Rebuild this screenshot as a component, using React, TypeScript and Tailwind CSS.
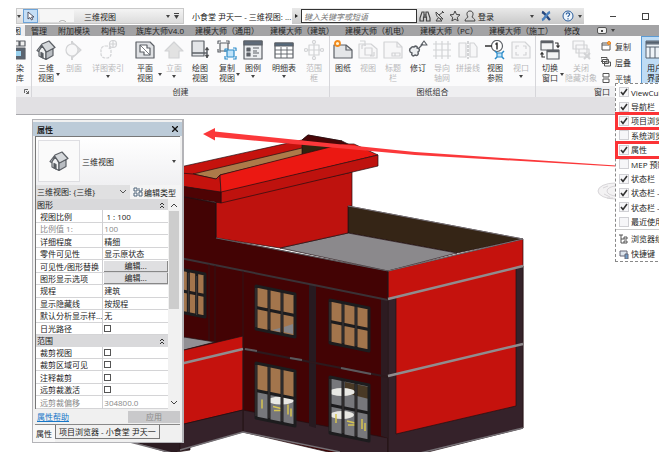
import React from 'react';

type Kids = { children?: React.ReactNode };

function Ico({ children, faded }: Kids & { faded?: boolean }) {
  return (
    <svg viewBox="0 0 20 20" className={faded ? 'size-5 opacity-25' : 'size-5'} fill="none" stroke="#5c6066" strokeWidth="1.2" strokeLinejoin="round">
      {children}
    </svg>
  );
}

function HouseShape() {
  return (
    <>
      <path d="M3 10v6l7 3.500V12L6.500 6z" fill="#f1f2f3" />
      <path d="M10 12v7.500l7-4V8z" fill="#b9bdc2" />
      <path d="M1 10.500 6 4l7-3 6 6.500L10.500 12 6 5.500 2.500 11.500z" fill="#d5d8db" />
      <path d="M5 12.500v4.500l2 1v-4.500z" fill="#55585c" />
    </>
  );
}

const icons: Record<string, React.ReactNode> = {
  house: <Ico><HouseShape /></Ico>,
  section: <Ico faded><path d="M8 2l9 8-9 8z" fill="#888" /><circle cx="8" cy="10" r="6" fill="#eee" /><path d="M8 1v3M8 16v4" strokeWidth="2" /></Ico>,
  callout: <Ico faded><rect x="3" y="6" width="10" height="12" rx="4" strokeDasharray="3 1" /><circle cx="15" cy="4" r="3.500" /><path d="M11.500 4h7M15 1v6M12 7l-1 2" /></Ico>,
  plan: <Ico><path d="M1 2h14l4 4v12H1z" fill="#dfe1e4" /><path d="M5 5h7v3h3v7H9v-3H5z" fill="#fff" /><path d="M5 5l10 10" strokeWidth=".8" /></Ico>,
  elevation: <Ico faded><path d="M10 2 1 11h4v7h10v-7h4z" fill="#999" /></Ico>,
  drafting: <Ico><path d="M2 1h12v15H2z" fill="#e3e5e8" /><path d="M2 13h15M17 8v10" strokeWidth="1.500" /><path d="m15 10 2-3 2 3zM15 15l2 3 2-3z" fill="#444" strokeWidth=".5" /></Ico>,
  duplicate: <Ico><path d="M3 3h8v8H3z" fill="#f4f4f4" /><path d="M1 4V1h3M9 1h3v3M1 9v3h3" /><path d="M10 10h7v7h-7z" fill="#bfe3fa" stroke="#2a8bc9" /><path d="M8 12V9h3M16 8h3v3M8 16v3h3M19 16v3h-3" stroke="#2a8bc9" /></Ico>,
  legend: <Ico><path d="M1 1h18v18H1z" fill="#eceef0" /><path d="M1 1h18v4H1z" fill="#5f6a78" /><path d="M4 8h3v3H4zM4 13h3v3H4z" fill="#5c6066" /><path d="M10 8h6M10 11h4M10 13h6M10 16h4" /></Ico>,
  schedule: <Ico><path d="M1 3h18v15H1z" fill="#fff" /><path d="M1 3h18v3H1z" fill="#55697c" /><path d="M1 10h18M1 14h18M7 7v11M13 7v11" strokeWidth=".9" /></Ico>,
  scope: <Ico faded><path d="M5 5h10v10H5zM10 3v14M3 10h14" /><circle cx="10" cy="2" r="1.500" /><circle cx="10" cy="18" r="1.500" /><circle cx="2" cy="10" r="1.500" /><circle cx="18" cy="10" r="1.500" /></Ico>,
  sheet: <Ico><path d="M1 5h12l6 5v8H1z" fill="#e4e6e8" /><path d="M13 5v5h6" /><circle cx="4.500" cy="3.500" r="2.500" fill="#fff3d0" stroke="#f28a1c" strokeWidth="1.800" /></Ico>,
  placeview: <Ico faded><path d="M1 4h12l6 5v9H1z" fill="#eee" /><path d="M7 8h7v7H7zM4 5v4M4 5h4M16 16h-4M16 16v-4M2 1h5v5" /></Ico>,
  titleblock: <Ico faded><path d="M1 2h13l5 5v11H1z" fill="#eee" /><path d="M9 13h8v3H9zM14 2v5h5M12 13v3" /></Ico>,
  revision: <Ico><path d="M3 8c1-2 3-1 3-1 2-2 4 0 3 1 3 0 3 3 1 4 1 3-1 4-3 3-2 2-4 0-3-2-3-1-3-4-1-5z" fill="#eceef0" strokeWidth="1.500" /><path d="m11 8 4-4M13 5l3-4 3 4z" /></Ico>,
  grid: <Ico faded><path d="M4 1v18M10 1v18M16 1v18M1 4h18M1 10h18M1 16h18" /></Ico>,
  matchline: <Ico faded><path d="M1 3h7v14H1zM12 3h4l3 4v10h-7z" fill="#eee" /><path d="M10 1v18" strokeDasharray="3 1" strokeWidth="2" /></Ico>,
  viewref: (
    <Ico>
      <circle cx="12" cy="6" r="5.500" fill="#fff" /><path d="M0 6h7M10.500 4.500 12 3v6.500" stroke="#333" strokeWidth="1.500" />
      <path d="M12 13h5v4h-5z" fill="#bfe3fa" stroke="#2a8bc9" /><path d="m10 11 2 2M19 11l-2 2M10 19l2-2M19 19l-2-2" stroke="#2a8bc9" strokeWidth="1.500" />
    </Ico>
  ),
  viewport: <Ico faded><path d="M1 2h13l5 5v11H1z" fill="#eee" /><path d="M5 9V6h3M12 6h3v3M5 12v3h3M15 12v3h-3" /></Ico>,
  swap: <Ico><path d="M1 1h12v9H1zM7 10h12v9H7z" fill="#f3f4f5" /><path d="M1 2h12M7 11h12" strokeWidth="2.500" /><path d="M15 3h3v4M16.500 5.500 18 7.500l1.500-2M5 17H2v-4M.5 14.500 2 12.500l1.500 2" stroke="#333" /></Ico>,
  closehidden: <Ico faded><path d="M2 1h11v8H2zM5 5h11v8H5zM8 9h10v8H8z" fill="#eee" /><path d="m13 13 6 6M19 13l-6 6" strokeWidth="2" /></Ico>,
  render: <Ico><path d="M0 1h5v5H0zM8 1h5v5H8zM14 1h5v5h-5z" fill="#eee" /><path d="M0 8h19v11H0z" fill="#5a6470" /><path d="M1 16h14V11H6z" fill="#9ad2ef" stroke="none" /></Ico>,
};

type Tool = { icon: string; label: string; w: string; off?: boolean; side?: boolean; below?: boolean };

const createTools: Tool[] = [
  { icon: 'house', label: '三维\n视图', w: 'w-7', side: true },
  { icon: 'section', label: '剖面', w: 'w-7', off: true },
  { icon: 'callout', label: '详图索引', w: 'w-10', off: true, below: true },
  { icon: 'plan', label: '平面\n视图', w: 'w-[34px]', side: true },
  { icon: 'elevation', label: '立面', w: 'w-6', off: true, below: true },
  { icon: 'drafting', label: '绘图\n视图', w: 'w-7' },
  { icon: 'duplicate', label: '复制\n视图', w: 'w-[26px]', side: true },
  { icon: 'legend', label: '图例', w: 'w-[26px]', below: true },
  { icon: 'schedule', label: '明细表', w: 'w-9', below: true },
  { icon: 'scope', label: '范围\n框', w: 'w-6', off: true },
];

const sheetTools: Tool[] = [
  { icon: 'sheet', label: '图纸', w: 'w-[26px]' },
  { icon: 'placeview', label: '视图', w: 'w-6', off: true },
  { icon: 'titleblock', label: '标题\n栏', w: 'w-[26px]', off: true },
  { icon: 'revision', label: '修订', w: 'w-6' },
  { icon: 'grid', label: '导向\n轴网', w: 'w-6', off: true },
  { icon: 'matchline', label: '拼接线', w: 'w-7', off: true },
  { icon: 'viewref', label: '视图\n参照', w: 'w-[26px]' },
  { icon: 'viewport', label: '视口', w: 'w-[26px]', off: true, below: true },
];

const windowTools: Tool[] = [
  { icon: 'swap', label: '切换\n窗口', w: 'w-7', side: true },
  { icon: 'closehidden', label: '关闭\n隐藏对象', w: 'w-[34px]', off: true },
];

function Caret({ className }: { className?: string }) {
  return (
    <svg viewBox="0 0 4 3" className={`h-[3px] w-1 shrink-0 ${className ?? ''}`} fill="#444"><path d="M0 0h4L2 3z" /></svg>
  );
}

function ToolButton({ tool }: { tool: Tool }) {
  return (
    <button type="button" disabled={tool.off} className={`relative flex shrink-0 flex-col items-center pt-1 ${tool.w}`}>
      {icons[tool.icon]}
      <span className={`mt-[3px] whitespace-pre text-center leading-[10px] ${tool.off ? 'text-[#b9b9bb]' : 'text-[#333]'}`}>{tool.label}</span>
      {tool.below && <Caret className="mt-0.5" />}
      {tool.side && <Caret className="absolute right-0 bottom-2.5" />}
    </button>
  );
}

function Panel({ title, children, className }: Kids & { title: React.ReactNode; className?: string }) {
  return (
    <section className={`flex shrink-0 flex-col border-r border-[#d6d6da] ${className ?? ''}`}>
      <div className="flex h-[50px] bg-[#fbfbfc]">{children}</div>
      <div className="h-[11px] bg-[#efeff1] text-center leading-[11px] text-[#333]">{title}</div>
    </section>
  );
}

function TitleBar() {
  return (
    <header className="flex h-4 items-center text-[#222]">
      <div className="flex h-4 w-[168px] shrink-0 items-center border border-[#c9c9c9] bg-linear-to-b from-[#f4f4f4] to-[#dcdcdc]">
        <Caret />
        <button type="button" aria-label="选择" className="ml-0.5 flex h-3.5 w-[15px] items-center justify-center border border-[#6da3d8] bg-[#c5def5]">
          <svg viewBox="0 0 8 10" className="h-2.5 w-2" fill="#fff" stroke="#445" strokeWidth=".9"><path d="M1 1v7l2-1.500L4.500 9l1.200-.7L4.500 6H7z" /></svg>
        </button>
        <div className="ml-0.5 flex h-3 w-[34px] items-end justify-end bg-[#f6f6f6] pr-2">
          <svg viewBox="0 0 7 2" className="h-0.5 w-[7px]" fill="none" stroke="#aaa"><path d="M0 2c2-2 5-2 7 0" /></svg>
        </div>
        <span className="ml-2.5 grow">三维视图</span>
        <Caret />
        <svg viewBox="0 0 5 6" className="mx-1 h-1.5 w-[5px]" fill="#444"><path d="M0 0h5v1H0zM0 2h5L2.500 6z" /></svg>
      </div>
      <h1 className="w-[108px] shrink-0 whitespace-nowrap pl-2">小食堂 尹天一 - 三维视图: ...</h1>
      <div className="flex h-4 grow items-center bg-linear-to-b from-[#e9e9e9] to-[#c9c9c9]">
        <svg viewBox="0 0 3 4" className="mx-[3px] h-1 w-[3px] shrink-0" fill="#222"><path d="M0 0v4l3-2z" /></svg>
        <input aria-label="搜索" placeholder="键入关键字或短语" className="h-3.5 w-[116px] border border-[#333] bg-white pl-0.5 text-[8px] italic placeholder:text-[#777]" />
        <svg viewBox="0 0 12 12" className="ml-0.5 size-3" fill="none" stroke="#444" strokeWidth="1.200"><path d="M3 2h2v3h2V2h2l2 6v3H7.500V7h-3v4H1V8zM5 5v3M7 5v3" /></svg>
        <svg viewBox="0 0 12 12" className="ml-[3px] size-3" fill="none" stroke="#444"><path d="M2 2c0 5 3 7 7 7zM5 5l4-3M8 1l2 2M4 8l-2 3h6L6 9" /></svg>
        <svg viewBox="0 0 12 12" className="ml-[3px] size-3" fill="none" stroke="#444"><path d="m6 1 1.500 3.500 3.500.3-2.700 2.500.8 3.700L6 9l-3.100 2 .8-3.700L1 4.800l3.500-.3z" /></svg>
        <svg viewBox="0 0 12 12" className="ml-[3px] size-3" fill="none" stroke="#444"><path d="M4 7C2 4 3 1 6 1s4 3 2 6c0 1 3 1 3 4H1c0-3 3-3 3-4z" /></svg>
        <button type="button" className="ml-0.5 shrink-0 text-[#222]">登录</button>
        <Caret className="ml-auto" />
        <svg viewBox="0 0 12 12" className="ml-1.5 size-3" fill="none" strokeWidth="2.400"><path d="M2 2c3 1 5 5 8 8" stroke="#26477d" /><path d="M10 2C7 3 5 9 2 10" stroke="#4b80be" /></svg>
        <svg viewBox="0 0 12 12" className="ml-2.5 size-3" fill="none"><circle cx="6" cy="6" r="5" fill="#eef5fc" stroke="#2a5d9c" /><path d="M4.300 4.500c0-2.500 3.500-2 3.300 0C7.500 5.800 6 5.500 6 7M6 8.200v1.200" stroke="#2a5d9c" strokeWidth="1.200" /></svg>
        <Caret className="mr-0.5 ml-1" />
      </div>
      <div className="flex w-[75px] shrink-0 items-center justify-end gap-[26px] pr-2.5">
        <button type="button" aria-label="最小化" className="h-px w-1.5 bg-[#444]" />
        <button type="button" aria-label="最大化" className="size-[7px] border border-[#444]" />
      </div>
    </header>
  );
}

const tabs = ['管理', '附加模块', '构件坞', '族库大师V4.0', '建模大师（通用）', '建模大师（建筑）', '建模大师（机电）', '建模大师（PC）', '建模大师（施工）', '修改'];

function Ribbon() {
  return (
    <>
      <nav className="mt-px flex h-[11px] items-center gap-[11px] overflow-hidden bg-[#a3a3a5] leading-[11px] text-[#222]">
        <button type="button" className="-mr-[5px] flex w-[9px] shrink-0 justify-end overflow-hidden bg-[#efeff1] pr-1">图</button>
        {tabs.map((t) => <button key={t} type="button" className="shrink-0 whitespace-nowrap">{t}</button>)}
        <button type="button" aria-label="面板显示" className="ml-1.5 flex shrink-0 items-center gap-1">
          <span className="flex h-[7px] w-2.5 items-center justify-center rounded-xs border border-[#555] bg-[#eee]"><span className="size-0.5 bg-[#444]" /></span>
          <Caret />
        </button>
      </nav>
      <div className="flex overflow-hidden">
        <Panel
          className="w-4 overflow-hidden"
          title={<svg viewBox="0 0 5 5" className="mt-[3px] ml-2 size-[5px]" fill="none" stroke="#444"><path d="M.5 4V.5H4M2 2l2.500 2.500M4.500 2v2.500H2" strokeWidth=".8" /></svg>}
        >
          <button type="button" className="-ml-2.5 flex w-5 shrink-0 flex-col items-center pt-1 text-[#333]">
            {icons.render}
            <span className="mt-[3px] whitespace-pre text-right leading-[10px]">{'渲染\n库'}</span>
          </button>
        </Panel>
        <Panel title="创建" className="w-[298px]">{createTools.map((t) => <ToolButton key={t.icon} tool={t} />)}</Panel>
        <Panel title="图纸组合" className="w-[206px]">{sheetTools.map((t) => <ToolButton key={t.icon} tool={t} />)}</Panel>
        <Panel title="窗口" className="w-[133px]">
          {windowTools.map((t) => <ToolButton key={t.icon} tool={t} />)}
          <div className="flex w-[43px] shrink-0 flex-col justify-around pt-0.5 pl-[3px] text-[#333]">
            <button type="button" className="flex items-center gap-1">
              <svg viewBox="0 0 10 10" className="size-2.5" fill="#fff" stroke="#555"><path d="M1 2h8v7H1zM1 4h7" /><circle cx="8" cy="2" r="1.500" fill="#f7b54a" stroke="#ee7d1a" /></svg>复制
            </button>
            <button type="button" className="flex items-center gap-1">
              <svg viewBox="0 0 10 10" className="size-2.5" fill="#fff" stroke="#555"><path d="M0 .5h6v4H0zM1.500 2.500h6v4h-6zM3.500 5h6v4h-6z" /></svg>层叠
            </button>
            <button type="button" className="flex items-center gap-1">
              <svg viewBox="0 0 10 10" className="size-2.5" fill="#fff" stroke="#555"><path d="M2 .5h6v3.500H2zM2 6h6v3.500H2z" /></svg>平铺
            </button>
          </div>
          <button type="button" className="flex w-7 shrink-0 flex-col items-center border border-[#5b9bd5] bg-[#bfdcf5] pt-[3px] text-[#222]">
            <svg viewBox="0 0 20 20" className="size-5" fill="#eef3f8" stroke="#566270"><path d="M1 1h18v17H1zM1 4h18M1 7h18M5 7v11M10 7v11" /><path d="M1 2.500h18" strokeWidth="2.500" /></svg>
            <span className="mt-[3px] whitespace-pre leading-[10px]">{'用户\n界面'}</span>
          </button>
        </Panel>
      </div>
      <div className="h-[18px] border-b border-[#a9a9ad] bg-[#e1e0e3]" />
    </>
  );
}

type Pane = [x: number, y: number, width: number, height: number, drop: number];

const panes: Pane[] = [
  [256, 286, 39, 43, 8],
  [330, 300, 39, 43, 8],
  [256, 363, 39, 55, 8],
  [330, 377, 39, 56, 8],
];

function BuildingWindow({ d, furnished }: { d: Pane; furnished?: 'low' | 'full' }) {
  const [x, y, w, h, s] = d;
  const m = y + h * 0.5;
  const a = furnished ? (furnished === 'full' ? y : m) : 0;
  return (
    <g>
      <path d={`M${x} ${y}l${w} ${s}v${h}l${-w} ${-s}z`} fill="#a3754c" />
      {furnished && (
        <>
          <path d={`M${x} ${a}l${w} ${s}V${y + h + s}l${-w} ${-s}z`} fill="#77777b" />
          {furnished === 'full' && <path d={`M${x + 15} ${y + 5}l24 5v12l-24 -6z`} fill="#493925" />}
          <g fill="#e9e8e4">
            {furnished === 'low' && <ellipse cx={x + 25} cy={m + 10} rx="13" ry="4" />}
            {furnished === 'full' && <><ellipse cx={x + 12} cy={y + 15} rx="13" ry="4" /><ellipse cx={x + 12} cy={y + 38} rx="12" ry="4" /></>}
          </g>
          <path d={`M${x + 6} ${m + 9}v9M${x + 17} ${m + 16}l8 2M${x + 32} ${m + 14}v10M${x + 18} ${m + 20}h9M${x + 35} ${m + 18}v8`} stroke="#d6c452" strokeWidth="1.500" />
        </>
      )}
      <g fill="none" stroke="#1d1c1e" strokeWidth="3">
        <path d={`M${x} ${y}l${w} ${s}v${h}l${-w} ${-s}z`} />
        <path d={`M${x + w / 3} ${y + s / 3}v${h}M${x + (w * 2) / 3} ${y + (s * 2) / 3}v${h}M${x} ${m}l${w} ${s}`} />
      </g>
      <path d={`M${x} ${y + 2}v${h - 4}M${x + w / 3} ${y + 4}v${h - 4}M${x + (w * 2) / 3} ${y + 7}v${h - 4}`} stroke="#57504f" strokeWidth=".6" />
    </g>
  );
}

function ModelView() {
  return (
    <svg viewBox="16 115 643 337" className="block w-full" role="img" aria-label="三维模型" strokeLinejoin="round">
      <g stroke="#221013" strokeWidth=".7">
        <path d="M130 441h60v9l-20 3z" fill="#2c1c22" />
        <path d="M180 195l36 8v35l172 33v195L243 432l-63 10z" fill="#430304" />
        <path d="M243 410l66 13 79 15v24L243 432z" fill="#35222a" />
        <path d="M184 337l31 5-35 9z" fill="#929094" />
        <path d="M180 351l63-15v74l-63 15z" fill="#c5120d" />
        <path d="M180 425l63-15v22l-63 18z" fill="#35222a" />
        <path d="M348 206l175 33-66 14-109-20z" fill="#352516" />
        <path d="M348 233l109 20-69 18-108-23z" fill="#8b898c" />
        <path d="M388 271l135-32v189l-103 25h-32z" fill="#c5120d" />
        <path d="M388 299l8-2v137l120-28V268l7-2v162l-103 26h-32z" fill="#35222a" />
        <path d="M309 284l7 2v142l-7-2z" fill="#271a20" stroke="none" />
        <path d="M381 298l7 2v138l-7-2z" fill="#2d1b21" stroke="none" />
        <path d="M216 202l136-30v34h-4v27l-68 15-64-10z" fill="#be120e" />
        <path d="M184 197l32 6v35" fill="none" />
        <path d="M180 167l122-27 6-5 34 6-30 9-92 25-4 5-36-6z" fill="#c5120d" />
        <path d="M302 140l6-5 34 6 8 4-10 2z" fill="#4a0607" />
        <path d="M302 142l36 4-36 10z" fill="#30240f" />
        <path d="M193 174l109-26v7l-82 20-4 4z" fill="#ad7a49" />
        <path d="M180 173l13 1 23 5 4-4 1 18-41-7z" fill="#c5120d" />
        <path d="M220 175l122-31h12l24 11-157 38z" fill="#eb1812" />
        <path d="M221 192l157-37v11l-157 37z" fill="#be120e" />
        <path d="M180 186l41 6v11l-41-7z" fill="#4e0304" />
      </g>
      <g fill="none" stroke="#5d585c" strokeWidth="2">
        <path d="M180 258l129 26 79 16" stroke="#3a3236" />
        <path d="M216 238l172 33" strokeWidth="1" />
        <path d="M243 349l145 28" stroke="#2c191d" />
        <path d="M245 349l12 2M290 358l12 2M341 368l30 6" />
      </g>
      <g fill="none" stroke="#29191c" strokeWidth=".8"><path d="M209 264v76M215 265v77M243 271v161M388 271v181" /></g>
      <g fill="none" stroke="#918c8e" strokeWidth="2.500">
        <path d="M388 299l135-33M388 376l135-32M180 364l63-15" />
        <path d="M348 206l175 33-135 32" strokeWidth="1" stroke="#757074" />
        <path d="M180 450l63-18 97 20M420 453l103-25M130 442l42 11" strokeWidth="1.500" stroke="#767176" />
      </g>
      <BuildingWindow d={[180, 269, 25, 43, 5]} />
      <BuildingWindow d={panes[0]} />
      <path d="M272 330l8-2v4zM284 327l9-3v10l-9-2z" fill="#858589" />
      <BuildingWindow d={panes[1]} />
      <BuildingWindow d={panes[2]} furnished="low" />
      <BuildingWindow d={panes[3]} furnished="full" />
      <g fill="#f3f2f3" stroke="#cfcdd0" strokeWidth=".8"><ellipse cx="615" cy="191" rx="17" ry="8" /><ellipse cx="617" cy="191" rx="10" ry="5" /><path d="M604 194l6 3M603 188l5-2M607 198h6" /></g>
      <path d="M203 134l12-6v3.500l200 20.500 201 13.500v1L415 155l-200-18v3.500z" fill="#fb383a" />
    </svg>
  );
}

function Tick({ id, on, box }: { id: string; on?: boolean; box: string }) {
  return (
    <span className="grid shrink-0">
      <input id={id} type="checkbox" defaultChecked={on} className={`col-start-1 row-start-1 appearance-none border ${box}`} />
      {on && <svg viewBox="0 0 10 10" className="pointer-events-none col-start-1 row-start-1 size-2.5" fill="none" stroke="#333" strokeWidth="1.600"><path d="m2 5 2 2.500L8 2" /></svg>}
    </span>
  );
}

const rows: [string, string][] = [
  ['#', '图形'], ['视图比例', ' 1 : 100'], ['比例值 1:', '100'], ['详细程度', '精细'], ['零件可见性', '显示原状态'],
  ['可见性/图形替换', 'btn'], ['图形显示选项', 'btn'], ['规程', '建筑'], ['显示隐藏线', '按规程'], ['默认分析显示样...', '无'], ['日光路径', 'box'],
  ['#', '范围'], ['裁剪视图', 'box'], ['裁剪区域可见', 'box'], ['注释裁剪', 'box'], ['远剪裁激活', 'box'], ['远剪裁偏移', '304800.0'],
];

function Properties() {
  return (
    <aside className="absolute top-1 left-4 w-[152px] border border-r-2 border-[#b4b4b8] bg-[#f0f0f0] text-[#222]">
      <div className="mt-0.5 flex h-3.5 items-center justify-between bg-[#bccbd8] px-1">
        <h2 className="font-bold">属性</h2>
        <button type="button" aria-label="关闭"><svg viewBox="0 0 6 6" className="size-1.5" stroke="#111" strokeWidth="1.300"><path d="m0 0 6 6M6 0 0 6" /></svg></button>
      </div>
      <div className="mx-0.5 border-t border-l border-[#777]">
        <button type="button" className="flex h-12 w-full items-center bg-linear-to-b from-white to-[#f0f0f2] pr-1 pl-0.5">
          <span className="flex h-[42px] w-[42px] items-center justify-center border border-[#dedee2] bg-[#fafafa]">{icons.house}</span>
          <span className="ml-0.5 grow text-left">三维视图</span>
          <Caret />
        </button>
        <div className="flex h-[14px] items-center bg-[#f4f4f4]">
          <div className="relative w-[94px]">
            <select aria-label="类型" className="h-3.5 w-full appearance-none bg-[#e0e0e1] pl-px text-[8px] leading-3.5"><option>三维视图: {'{三维}'}</option></select>
            <svg viewBox="0 0 6 4" className="pointer-events-none absolute top-[5px] right-1 h-1 w-1.5" fill="none" stroke="#555"><path d="m0 0 3 3 3-3" /></svg>
          </div>
          <button type="button" className="ml-[3px] flex items-center gap-px whitespace-nowrap">
            <svg viewBox="0 0 10 10" className="size-2.5" fill="#fff" stroke="#4c6379"><path d="M1 1h3v3H1zM1 6h3v3H1zM6 5h3v4H6zM6 1v3h3V1" /></svg>编辑类型
          </button>
        </div>
        <div className="flex">
          <table className="h-[210px] grow table-fixed border-collapse bg-white leading-[11px]">
            <colgroup><col className="w-[66px]" /><col className="w-[66px]" /></colgroup>
            <tbody>
              {rows.map(([k, v]) => k === '#' ? (
                <tr key={v} className="bg-[#d9d9db]"><th colSpan={2} scope="rowgroup" className="p-0 pl-px text-left font-normal">
                  <span className="flex items-center justify-between pr-1">{v}<svg viewBox="0 0 4 6" className="h-1.5 w-1" fill="none" stroke="#333"><path d="m0 3 2-2 2 2M0 6l2-2 2 2" /></svg></span>
                </th></tr>
              ) : (
                <tr key={k} className={`border-b border-[#d4d4d6] ${v === '100' || v === '304800.0' ? 'text-[#888]' : ''}`}>
                  <th scope="row" className="whitespace-nowrap border-r border-[#cfcfd2] p-0 pl-1 text-left font-normal">{v === 'box' ? <label htmlFor={k}>{k}</label> : k}</th>
                  <td className="whitespace-pre p-0 pl-px">
                    {v === 'btn' ? <button type="button" aria-label={k} className="block h-[11px] w-full border-r border-b border-[#888] bg-[#dfdfe1] text-center leading-[10px]">编辑...</button>
                      : v === 'box' ? <Tick id={k} box="size-[7px] border-[#555] bg-white" /> : v}
                  </td>
                </tr>
              ))}
            </tbody>
          </table>
          <div className="flex w-3 shrink-0 flex-col items-center justify-between bg-[#f1f1f1] py-1">
            <svg viewBox="0 0 6 4" className="h-1 w-1.5" fill="none" stroke="#444"><path d="m0 4 3-3 3 3" /></svg>
            <div className="mt-1 mb-auto h-[98px] w-2.5 bg-[#cdcdcd]" />
            <svg viewBox="0 0 6 4" className="h-1 w-1.5" fill="none" stroke="#444"><path d="m0 0 3 3 3-3" /></svg>
          </div>
        </div>
      </div>
      <div className="mx-0.5 flex h-4 items-center justify-between border-b border-[#888] pl-0.5">
        <a href="#help" className="text-[#1677c8] underline">属性帮助</a>
        <button type="button" disabled className="h-3 w-[52px] bg-[#c9c9cb] leading-3 text-[#888]">应用</button>
      </div>
      <div className="flex h-[17px]">
        <button type="button" className="w-[22px] bg-[#f8f8f8] text-center">属性</button>
        <button type="button" className="mb-[3px] whitespace-nowrap border border-t-0 border-[#777] px-[3px]">项目浏览器 - 小食堂 尹天一</button>
      </div>
    </aside>
  );
}

const menu: [string, boolean][] = [
  ['ViewCube', true], ['导航栏', true], ['项目浏览器', true], ['系统浏览器', false], ['属性', true],
  ['MEP 预制零件', false], ['状态栏', true], ['状态栏 - 工作集', true], ['状态栏 - 设计选项', true], ['最近使用的文件', false],
];

function UiMenu() {
  return (
    <div className="absolute top-[75px] -right-6 w-[68px] border border-dashed border-[#888] bg-white text-[#222]">
      <ul className="grid h-[145px] auto-rows-fr pt-px">
        {menu.map(([t, on], i) => (
          <li key={t} className="relative flex items-center gap-0.5 whitespace-nowrap pl-[3px]">
            <Tick id={`m${i}`} on={on} box="size-2.5 border-[#d0d0d4] bg-[#f6f6f8]" />
            <label htmlFor={`m${i}`}>{t}</label>
            {(i === 2 || i === 4) && <span className="pointer-events-none absolute -inset-x-px -inset-y-0.5 border-3 border-[#fb3336]" />}
          </li>
        ))}
      </ul>
      <div className="grid auto-rows-[15px] border-t border-[#ccc] pt-px">
        <button type="button" className="flex items-center gap-0.5 whitespace-nowrap pl-[3px]">
          <svg viewBox="0 0 10 10" className="size-2.5" fill="none" stroke="#555"><path d="M0 1h4M2 1v8h3M2 5h3M5 3h3v2H5zM5 7h3v2H5z" /></svg>浏览器组织
        </button>
        <button type="button" className="flex items-center gap-0.5 whitespace-nowrap pl-[3px]">
          <svg viewBox="0 0 10 10" className="size-2.5" fill="#dde5ee" stroke="#667"><path d="M1 2h7v5H1z" /><path d="M6 5h3v5H6z" fill="#6c9bc9" /></svg>快捷键
        </button>
      </div>
    </div>
  );
}

export default function App() {
  return (
    <div className="bg-white pr-1.5 pl-4 font-['Open_Sans','Noto_Sans_CJK_SC',sans-serif] text-[8px] leading-[11px]">
      <div className="relative overflow-hidden pt-2">
        <TitleBar />
        <Ribbon />
        <main className="relative">
          <ModelView />
          <Properties />
        </main>
        <div className="absolute inset-x-0 top-2"><UiMenu /></div>
      </div>
    </div>
  );
}
